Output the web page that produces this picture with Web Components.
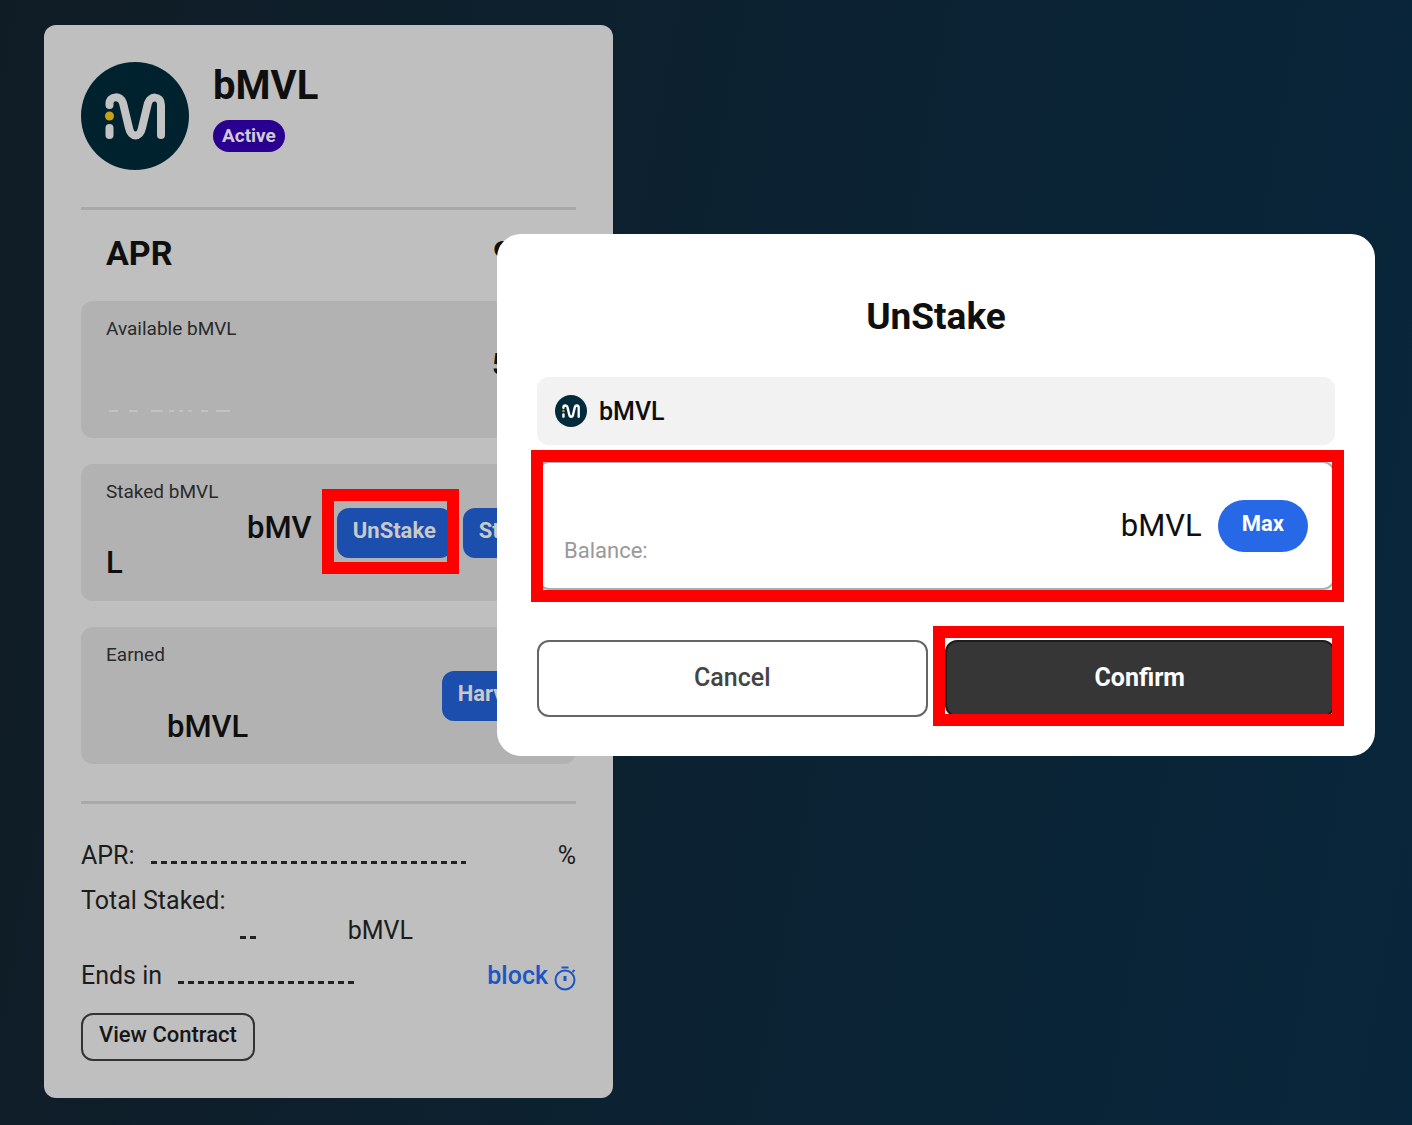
<!DOCTYPE html>
<html lang="en">
<head>
<meta charset="utf-8">
<meta name="viewport" content="width=device-width, initial-scale=1">
<title>bMVL staking</title>
<style>
html {
    min-height: 100%;
    background: linear-gradient(100deg, #101c25 0%, #0c2130 45%, #08263b 100%);
}

body {
    margin: 0;
    font-family: Roboto, "Liberation Sans", sans-serif;
    color: #0f0f0f;
}
</style>
</head>
<body>
<stake-page></stake-page>

<script>
//Clone a template into an open shadow root
function attachTemplate(element, html) {
    var template = document.createElement("template");
    template.innerHTML = html;
    element.attachShadow({mode:"open"}).appendChild(template.content.cloneNode(true));
}

//Round coin logo, sized by --size
class CoinLogo extends HTMLElement {
    constructor(){
        super();
        attachTemplate(this, `
<style>
:host { display: block; flex: none; width: var(--size, 108px); height: var(--size, 108px); }
svg { display: block; width: 100%; height: 100%; }
.disc { fill: var(--disc, #00222e); }
.line { fill: none; stroke: var(--ink, #c3c3c3); stroke-width: 8; stroke-linecap: round; }
.dot { fill: #c9a214; }
</style>
<svg viewBox="0 0 108 108" aria-hidden="true">
    <circle class="disc" cx="54" cy="54" r="54"/>
    <path class="line" stroke-linejoin="round" d="M28.500 43 V41 C28.500 34 40 33 42 41 L48 66 C50 76 59 76 61 66 L67 41 C69 34 80 33 80 43 V73"/>
    <path class="line" d="M28.500 66 V73"/>
    <circle class="dot" cx="28.500" cy="54" r="4.500"/>
</svg>
`);
    }
}
customElements.define("coin-logo", CoinLogo)

//Red outline drawn around whatever is slotted in
class FocusFrame extends HTMLElement {
    constructor(){
        super();
        attachTemplate(this, `
<style>
:host { display: grid; position: relative; }
:host::after {
    content: "";
    position: absolute;
    inset: var(--frame-inset, -12px);
    border: 12px solid #ff0000;
    pointer-events: none;
}
</style>
<slot></slot>
`);
    }
}
customElements.define("focus-frame", FocusFrame)

//Buttons: kind is outline, ghost, dark or pill, plain blue without one
class StakeButton extends HTMLElement {
    constructor(){
        super();
        attachTemplate(this, `
<style>
:host { display: grid; }
button {
    box-sizing: border-box;
    height: 50px;
    padding: 0 16px 4px;
    border: none;
    border-radius: 12px;
    font: 700 22px/28px Roboto, "Liberation Sans", sans-serif;
    white-space: nowrap;
    color: #c9c9c9;
    background: #1c4eae;
}
:host([kind="outline"]) button {
    height: 48px;
    border: 2px solid #333333;
    font-weight: 500;
    color: #161616;
    background: transparent;
}
:host([kind="ghost"]) button, :host([kind="dark"]) button {
    height: 77px;
    padding-bottom: 2px;
    border: 2px solid #666666;
    font-size: 25px;
    font-weight: 500;
    color: #444444;
    background: #ffffff;
}
:host([kind="dark"]) button {
    border-color: #1c1c1c;
    font-weight: 700;
    color: #ffffff;
    background: #363636;
}
:host([kind="pill"]) button {
    height: 52px;
    padding: 0 24px 4px;
    border-radius: 26px;
    color: #ffffff;
    background: #2668e6;
}
</style>
<button type="button"><slot></slot></button>
`);
    }
}
customElements.define("stake-button", StakeButton)

//Grey panel with a small caption on top
class StakePanel extends HTMLElement {
    constructor(){
        super();
        attachTemplate(this, `
<style>
:host {
    display: flex;
    flex-direction: column;
    box-sizing: border-box;
    min-height: 137px;
    padding: 16px 25px;
    border-radius: 12px;
    background: #b2b2b2;
}
.caption { font-size: 19px; line-height: 24px; color: #2a2a2a; }
</style>
<div class="caption"></div>
<slot></slot>
`);
    }

    connectedCallback(){
        this.shadowRoot.querySelector(".caption").textContent = this.getAttribute("caption")
    }
}
customElements.define("stake-panel", StakePanel)

//Label, dashed leader and value on one line
class StatRow extends HTMLElement {
    constructor(){
        super();
        attachTemplate(this, `
<style>
:host { display: flex; font-size: 25px; line-height: 30px; color: #1c1c1c; }
.leader {
    flex: 0 1 var(--leader, 315px);
    height: 3px;
    margin: 20px auto 0 16px;
    background: repeating-linear-gradient(90deg, #222222 0 6px, transparent 6px 10px);
}
</style>
<slot name="label"></slot>
<span class="leader"></span>
<slot></slot>
`);
    }
}
customElements.define("stat-row", StatRow)

class StakeCard extends HTMLElement {
    constructor(){
        super();
        attachTemplate(this, `
<style>
:host {
    display: flex;
    flex-direction: column;
    box-sizing: border-box;
    padding: 37px;
    border-radius: 12px;
    background: #bfbfbf;
}
header { display: flex; gap: 24px; }
h1 { margin: 0; font-size: 40px; line-height: 48px; font-weight: 700; }
.badge {
    display: inline-block;
    margin-top: 10px;
    padding: 0 9px;
    border-radius: 16px;
    font-size: 19px;
    line-height: 32px;
    font-weight: 700;
    color: #d0cbd8;
    background: #2a0090;
}
hr { width: 100%; height: 3px; margin: 37px 0 0; border: none; background: #a9a9a9; }
.apr {
    display: flex;
    justify-content: space-between;
    padding: 23px 25px 28px;
    font-size: 34px;
    line-height: 40px;
    font-weight: 700;
}
.apr span { width: 58px; }
.panels { display: grid; gap: 26px; }
.amount { font-size: 31px; line-height: 35px; font-weight: 500; }
.available { align-self: flex-end; width: 59px; margin-top: 6px; font-weight: 700; }
.remnant { display: block; width: 124px; height: 2px; margin-top: 28px; stroke: #c2c2c2; stroke-width: 2; }
.staked { display: flex; gap: 11px; }
.staked .amount { flex: 1; text-indent: 141px; word-break: break-all; margin-top: 6px; }
.staked stake-button, .staked focus-frame { align-self: start; margin-top: 4px; }
.staked focus-frame stake-button { margin: 0; }
.earned { display: flex; justify-content: space-between; align-items: flex-start; margin-top: 4px; }
.earned .amount { margin: 38px 0 0 61px; }
focus-frame { --frame-inset: -19px -7px -16px -15px; }
.stats { display: grid; gap: 15px; margin: 37px 0 22px; }
.total { font-size: 25px; line-height: 30px; color: #1c1c1c; }
.total div { display: flex; padding-left: 143px; }
.total stat-row { flex: 1; --leader: 16px; }
.block { display: flex; align-items: center; gap: 6px; font-weight: 500; color: #1c55c4; text-decoration: none; }
.block svg { width: 22px; height: 26px; margin-top: 4px; }
.total-value { margin-right: 163px; }
.contract { align-self: flex-start; }
</style>
<header>
    <coin-logo></coin-logo>
    <div>
        <h1>bMVL</h1>
        <span class="badge">Active</span>
    </div>
</header>
<hr>
<div class="apr">APR <span>9</span></div>
<div class="panels">
    <stake-panel caption="Available bMVL">
        <div class="amount available">5</div>
        <svg class="remnant" viewBox="0 0 124 2" aria-hidden="true">
            <path d="M3 1 H12 M23 1 H32 M45 1 H57 M63 1 H68 M73 1 H77 M82 1 H86 M95 1 H102 M110 1 H124"/>
        </svg>
    </stake-panel>
    <stake-panel caption="Staked bMVL">
        <div class="staked">
            <div class="amount">bMVL</div>
            <focus-frame><stake-button>UnStake</stake-button></focus-frame>
            <stake-button>Stake</stake-button>
        </div>
    </stake-panel>
    <stake-panel caption="Earned">
        <div class="earned">
            <div class="amount">bMVL</div>
            <stake-button>Harvest</stake-button>
        </div>
    </stake-panel>
</div>
<hr>
<div class="stats">
    <stat-row><span slot="label">APR:</span>%</stat-row>
    <div class="total">
        Total Staked:
        <div><stat-row><span class="total-value">bMVL</span></stat-row></div>
    </div>
    <stat-row style="--leader: 179px">
        <span slot="label">Ends in</span>
        <a class="block" href="#">block<svg viewBox="0 0 22 26" fill="none" stroke="currentColor" stroke-width="2" aria-hidden="true">
            <circle cx="11" cy="15" r="9.500"/>
            <path d="M7.500 2.500 H14.500 M18.500 7 L20.500 5"/>
            <path d="M11 11 V16" stroke-width="3"/>
        </svg></a>
    </stat-row>
</div>
<stake-button class="contract" kind="outline">View Contract</stake-button>
`);
    }
}
customElements.define("stake-card", StakeCard)

class UnstakeDialog extends HTMLElement {
    constructor(){
        super();
        attachTemplate(this, `
<style>
:host {
    display: flex;
    flex-direction: column;
    box-sizing: border-box;
    padding: 60px 40px 39px;
    border-radius: 24px;
    background: #ffffff;
}
h2 { margin: 0 0 37px; font-size: 37px; line-height: 46px; font-weight: 700; text-align: center; }
.token {
    display: flex;
    align-items: center;
    gap: 12px;
    height: 68px;
    padding: 0 18px;
    margin-bottom: 16px;
    border-radius: 12px;
    font-size: 25px;
    font-weight: 500;
    background: #f2f2f2;
    --size: 32px;
    --disc: #002b3c;
    --ink: #ffffff;
}
.entry {
    display: flex;
    align-items: center;
    gap: 16px;
    box-sizing: border-box;
    height: 129px;
    padding: 0 25px;
    border: 2px solid #a3b0b5;
    border-radius: 12px;
    font-size: 31px;
}
.entry label { flex: 1; min-width: 0; font-size: 22px; line-height: 28px; color: #999999; }
input {
    display: block;
    width: 100%;
    height: 50px;
    padding: 0;
    border: none;
    outline: none;
    font: 400 31px/36px Roboto, "Liberation Sans", sans-serif;
}
.entry-frame { --frame-inset: -11px -9px -12px -6px; }
.actions { display: grid; grid-template-columns: 1fr 1fr; gap: 17px; margin-top: 50px; }
.confirm-frame { --frame-inset: -14px -9px -9px -12px; }
</style>
<h2>UnStake</h2>
<div class="token"><coin-logo></coin-logo>bMVL</div>
<focus-frame class="entry-frame">
    <div class="entry">
        <label><input type="text" inputmode="decimal">Balance:</label>
        <span>bMVL</span>
        <stake-button kind="pill">Max</stake-button>
    </div>
</focus-frame>
<div class="actions">
    <stake-button kind="ghost">Cancel</stake-button>
    <focus-frame class="confirm-frame"><stake-button kind="dark">Confirm</stake-button></focus-frame>
</div>
`);
    }
}
customElements.define("unstake-dialog", UnstakeDialog)

//The dialog shares the middle grid column with the card, so it covers its right side
class StakePage extends HTMLElement {
    constructor(){
        super();
        attachTemplate(this, `
<style>
:host {
    display: grid;
    grid-template-columns: 453fr 116fr 762fr;
    padding: 25px 37px 26px 44px;
}
stake-card { grid-area: 1 / 1 / 2 / 3; }
unstake-dialog { grid-area: 1 / 2 / 2 / 4; align-self: start; margin-top: 209px; z-index: 1; }
</style>
<stake-card></stake-card>
<unstake-dialog role="dialog" aria-label="UnStake"></unstake-dialog>
`);
    }
}
customElements.define("stake-page", StakePage)
</script>
</body>
</html>
